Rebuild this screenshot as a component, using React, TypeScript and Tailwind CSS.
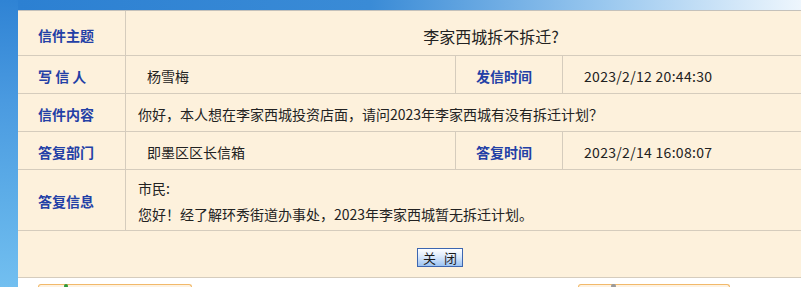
import React from "react";

type Row = {
  label: string;
  value: React.ReactNode;
  label2?: string;
  value2?: string;
};

const labelCls =
  "flex items-center pl-[20px] pt-[3px] font-bold text-[14px] text-[#2340a6]";
const cellCls = "flex items-center pt-[3px] text-[14px] text-[#222]";

function InfoRow({ label, value, label2, value2 }: Row) {
  return (
    <div className="grid h-[38px] grid-cols-[107px_330px_107px_1fr] border-b border-[#d5ccbd]">
      <div className={labelCls}>{label}</div>
      <div className={`${cellCls} border-l border-[#d5ccbd] pl-[21px]`}>{value}</div>
      <div className={`${labelCls} border-l border-[#d5ccbd]`}>{label2}</div>
      <div className={`${cellCls} border-l border-[#d5ccbd] pl-[21px] tracking-[0.3px]`}>{value2}</div>
    </div>
  );
}

export default function App() {
  return (
    <div className="flex h-[287px] w-[801px] overflow-hidden bg-white font-['Noto_Sans_CJK_SC',sans-serif]">
      <div className="w-[18px] shrink-0 bg-[linear-gradient(to_bottom,#2f83d4,#4a9ae0_35%,#5eaee8_70%,#72bff0)]" />
      <div className="flex min-w-0 flex-1 flex-col">
        <div className="h-[10px] w-[783px] shrink-0 bg-[linear-gradient(to_right,#2c80d2,#3a8bd6_45%,#9ac8ef_75%,#eef6fd)]" />
        <div className="w-[842px] shrink-0 border-t border-[#c4c1bb] bg-[#fdf1dc]">
          {/* subject */}
          <div className="grid h-[45px] grid-cols-[107px_1fr] border-b border-[#d5ccbd]">
            <div className={labelCls + " pt-[5px]"}>信件主题</div>
            <div className="flex items-center justify-center border-l border-[#d5ccbd] pt-[5px] pr-[4px] text-[16px] text-[#222]">
              李家西城拆不拆迁?
            </div>
          </div>
          <InfoRow label="写 信 人" value="杨雪梅" label2="发信时间" value2="2023/2/12 20:44:30" />
          <div className="grid h-[38px] grid-cols-[107px_1fr] border-b border-[#d5ccbd]">
            <div className={labelCls}>信件内容</div>
            <div className={`${cellCls} border-l border-[#d5ccbd] pl-[12px]`}>
              你好，本人想在李家西城投资店面，请问2023年李家西城有没有拆迁计划？
            </div>
          </div>
          <InfoRow label="答复部门" value="即墨区区长信箱" label2="答复时间" value2="2023/2/14 16:08:07" />
          <div className="grid h-[61px] grid-cols-[107px_1fr] border-b border-[#d5ccbd]">
            <div className={labelCls}>答复信息</div>
            <div className="flex flex-col justify-center border-l border-[#d5ccbd] pl-[12px] pt-[2px] text-[14px] leading-[26px] text-[#222]">
              <p>市民:</p>
              <p>您好！经了解环秀街道办事处，2023年李家西城暂无拆迁计划。</p>
            </div>
          </div>
          <div className="flex h-[47px] items-center justify-center border-b border-[#d5ccbd] pt-[7px] pl-[2px]">
            <button className="flex h-[19px] w-[46px] items-center justify-center gap-[8px] border border-[#3d66b0] bg-[linear-gradient(to_bottom,#ffffff,#dbe9fb_45%,#9cc3f2)] text-[13px] leading-none text-[#1a1a1a]">
              <span>关</span>
              <span>闭</span>
            </button>
          </div>
        </div>
        <div className="flex gap-[386px] pl-[20px] pt-[6px]">
          <div className="relative h-[10px] w-[154px] rounded-t-[3px] border border-b-0 border-[#f2b96a] bg-[#fdf2e2]">
            <span className="absolute left-[25px] top-[-1px] h-[4px] w-[4px] rounded-full bg-[#2e9a3a]" />
          </div>
          <div className="relative h-[10px] w-[152px] rounded-t-[3px] border border-b-0 border-[#f2b96a] bg-[#fdf2e2]">
            <span className="absolute left-[32px] top-[-1px] h-[4px] w-[5px] rounded-full bg-[#9a9a9a]" />
          </div>
        </div>
      </div>
    </div>
  );
}
